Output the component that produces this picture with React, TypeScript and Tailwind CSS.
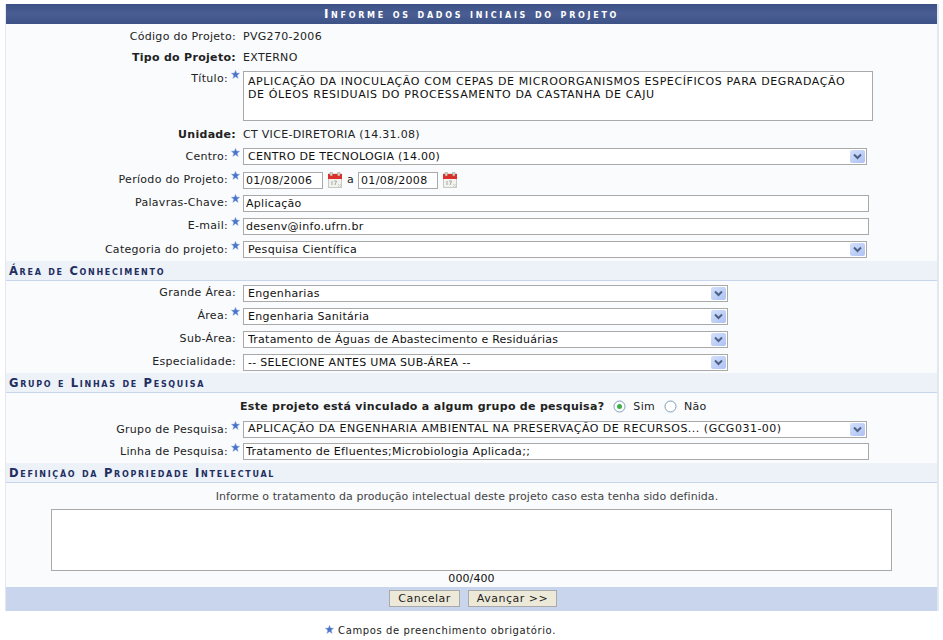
import type { ReactNode } from 'react'

const inputCls = 'bg-white border border-[#a9a9a9] px-[2px] text-[11px] text-[#111] outline-none'

function Star() {
  return (
    <svg width="9" height="9" viewBox="0 0 10 10" className="shrink-0 -translate-y-[1px]">
      <path d="M5 0.3 6.3 3.4 9.7 3.6 7 5.8 8 9.4 5 7.4 2 9.4 3 5.8 0.3 3.6 3.7 3.4Z" fill="#4a74c9" stroke="#9db4e4" strokeWidth="0.5" />
    </svg>
  )
}

function Calendar() {
  return (
    <svg width="14" height="16" viewBox="0 0 14 16" className="shrink-0">
      <rect x="0.5" y="2" width="13" height="13.5" fill="#f1f1ee" stroke="#c9c9c4" />
      <rect x="0" y="2" width="14" height="5" fill="#dc2f2a" />
      <rect x="2" y="0" width="2.5" height="4" rx="1" fill="#d9d2c4" stroke="#8a8174" strokeWidth="0.4" />
      <rect x="9.5" y="0" width="2.5" height="4" rx="1" fill="#d9d2c4" stroke="#8a8174" strokeWidth="0.4" />
      <path d="M4 9v4M6 9h2.5L7 13" stroke="#a8a8a4" fill="none" />
      <path d="M10 12l3 3M13 12l-3 3" stroke="#d0d0cc" />
    </svg>
  )
}

function Select({ value, width, tracking = '' }: { value: string; width: string; tracking?: string }) {
  return (
    <div className={`relative h-[17px] ${width}`}>
      <select
        defaultValue={value}
        className={`appearance-none w-full h-full bg-white border border-[#a9a9a9] pl-[4px] pr-5 text-[11px] text-[#111] outline-none ${tracking}`}
      >
        <option>{value}</option>
      </select>
      <span className="absolute right-[2px] top-[2px] h-[13px] w-[15px] rounded-[2px] bg-gradient-to-br from-[#d4e0fb] to-[#adc2f3] flex items-center justify-center pointer-events-none">
        <svg width="9" height="7" viewBox="0 0 9 7">
          <path d="M1 1.5 4.5 5 8 1.5" stroke="#4d6185" strokeWidth="2" fill="none" />
        </svg>
      </span>
    </div>
  )
}

function Row({ label, bold, star, h, top, flat, children }: { label: string; bold?: boolean; star?: boolean; h: string; top?: boolean; flat?: boolean; children: ReactNode }) {
  return (
    <div className={`flex ${h} ${top ? 'items-start' : 'items-center'}`}>
      <div className={`w-[234px] shrink-0 flex justify-end gap-[3px] ${top ? 'pt-[3px]' : ''}`}>
        <span className={`whitespace-nowrap leading-[14px] pt-[1px] ${bold ? 'font-bold' : ''} ${!star ? 'mr-[4px]' : ''}`}>{label}</span>
        {star && <Star />}
      </div>
      <div className={`ml-[3px] flex-1 flex items-center min-w-0 leading-[14px] ${top ? 'pt-[3px]' : flat ? '' : 'pt-[1px]'}`}>{children}</div>
    </div>
  )
}

function Section({ title }: { title: string }) {
  return (
    <div className="h-5 bg-[#edf1f8] border-b border-[#c8d5ec] pl-[3px] pt-[3px] flex items-center font-bold text-[#222e5f] text-[11.5px] tracking-[1.7px] [font-variant:small-caps]">
      {title}
    </div>
  )
}

export default function App() {
  return (
    <div className="min-h-[640px] bg-white pt-1 px-[5px] text-[11px] text-[#222] tracking-[0.3px] [font-family:'DejaVu_Sans',Verdana,sans-serif]">
      <div className="w-[934px] border-r-2 border-l border-[#e4e7ee] bg-[#f9fbfd]">
        <div className="h-5 bg-gradient-to-b from-[#3c5186] via-[#4a5e93] to-[#3c5186] text-white font-bold text-center text-[12px] leading-[20px] tracking-[2.7px] [font-variant:small-caps]">
          Informe os dados iniciais do projeto
        </div>

        <Row label="Código do Projeto:" h="h-[22px] mt-[1px]">PVG270-2006</Row>
        <Row label="Tipo do Projeto:" bold h="h-[21px]">EXTERNO</Row>
        <Row label="Título:" star top h="h-[55px]">
          <textarea
            readOnly
            defaultValue={'APLICAÇÃO DA INOCULAÇÃO COM CEPAS DE MICROORGANISMOS ESPECÍFICOS PARA DEGRADAÇÃO\nDE ÓLEOS RESIDUAIS DO PROCESSAMENTO DA CASTANHA DE CAJU'}
            className="w-[630px] h-[50px] resize-none bg-white border border-[#a9a9a9] px-[4px] pt-[3px] text-[11px] leading-[13px] tracking-[0.6px] text-[#111] outline-none"
          />
        </Row>
        <Row label="Unidade:" bold h="h-[22px]">CT VICE-DIRETORIA (14.31.08)</Row>
        <Row label="Centro:" star flat h="h-[23px]">
          <Select value="CENTRO DE TECNOLOGIA (14.00)" width="w-[624px]" />
        </Row>
        <Row label="Período do Projeto:" star h="h-[23px]">
          <input readOnly defaultValue="01/08/2006" className={`${inputCls} w-[80px] h-[17px]`} />
          <span className="ml-[5px]"><Calendar /></span>
          <span className="ml-[5px] mr-[4px]">a</span>
          <input readOnly defaultValue="01/08/2008" className={`${inputCls} w-[80px] h-[17px]`} />
          <span className="ml-[5px]"><Calendar /></span>
        </Row>
        <Row label="Palavras-Chave:" star h="h-[23px]">
          <input readOnly defaultValue="Aplicação" className={`${inputCls} w-[626px] h-[17px]`} />
        </Row>
        <Row label="E-mail:" star h="h-[23px]">
          <input readOnly defaultValue="desenv@info.ufrn.br" className={`${inputCls} w-[626px] h-[17px]`} />
        </Row>
        <Row label="Categoria do projeto:" star h="h-[24px]">
          <Select value="Pesquisa Científica" width="w-[624px]" />
        </Row>

        <Section title="Área de Conhecimento" />
        <Row label="Grande Área:" h="h-[23px]"><Select value="Engenharias" width="w-[485px] mt-[1px]" /></Row>
        <Row label="Área:" star h="h-[23px]"><Select value="Engenharia Sanitária" width="w-[485px] mt-[1px]" /></Row>
        <Row label="Sub-Área:" h="h-[23px]"><Select value="Tratamento de Águas de Abastecimento e Residuárias" width="w-[485px] mt-[1px]" tracking="tracking-[0.24px]" /></Row>
        <Row label="Especialidade:" h="h-[23px]"><Select value="-- SELECIONE ANTES UMA SUB-ÁREA --" width="w-[485px] mt-[1px]" /></Row>

        <Section title="Grupo e Linhas de Pesquisa" />
        <div className="h-[25px] pt-[4px] flex items-center pl-[234px] gap-[4px]">
          <span className="font-bold">Este projeto está vinculado a algum grupo de pesquisa?</span>
          <svg width="13" height="13" viewBox="0 0 13 13" className="ml-[5px] -translate-y-[1px]">
            <circle cx="6.5" cy="6.5" r="5.5" fill="#fff" stroke="#7f9db9" />
            <circle cx="6.5" cy="6.5" r="2.5" fill="#3fae49" />
          </svg>
          <span className="ml-[3px]">Sim</span>
          <svg width="13" height="13" viewBox="0 0 13 13" className="ml-[5px] -translate-y-[1px]">
            <circle cx="6.5" cy="6.5" r="5.5" fill="#fff" stroke="#7f9db9" />
          </svg>
          <span className="ml-[3px]">Não</span>
        </div>
        <Row label="Grupo de Pesquisa:" star flat h="h-[22px]">
          <Select value="APLICAÇÃO DA ENGENHARIA AMBIENTAL NA PRESERVAÇÃO DE RECURSOS... (GCG031-00)" width="w-[624px]" tracking="tracking-[0.5px]" />
        </Row>
        <Row label="Linha de Pesquisa:" star h="h-[22px]">
          <input readOnly defaultValue="Tratamento de Efluentes;Microbiologia Aplicada;;" className={`${inputCls} w-[626px] h-[17px]`} />
        </Row>
        <div className="h-[1px]" />

        <Section title="Definição da Propriedade Intelectual" />
        <div className="h-[26px] pt-[2px] pr-[9px] flex items-center justify-center text-[#444] tracking-[0.06px]">
          Informe o tratamento da produção intelectual deste projeto caso esta tenha sido definida.
        </div>
        <div className="flex justify-center">
          <textarea readOnly className="w-[841px] h-[62px] resize-none bg-white border border-[#a9a9a9] outline-none" />
        </div>
        <div className="h-[16px] flex items-center justify-center text-[#111] tracking-[0.1px]">000/400</div>
        <div className="h-6 bg-[#c8d5ec] flex items-center justify-center gap-[8px] pl-[3px] pb-[1px]">
          <button className="h-[17px] w-[71px] bg-[#ece9d8] border border-[#a9a9a9] text-[11px] text-[#222] tracking-[0.5px]">Cancelar</button>
          <button className="h-[17px] w-[89px] bg-[#ece9d8] border border-[#a9a9a9] text-[11px] text-[#222] tracking-[0.5px]">Avançar &gt;&gt;</button>
        </div>
      </div>

      <div className="mt-[12px] flex items-center justify-center gap-[4px] text-[10px] text-[#222] tracking-[0.6px] pr-[62px]">
        <Star />
        Campos de preenchimento obrigatório.
      </div>
    </div>
  )
}
